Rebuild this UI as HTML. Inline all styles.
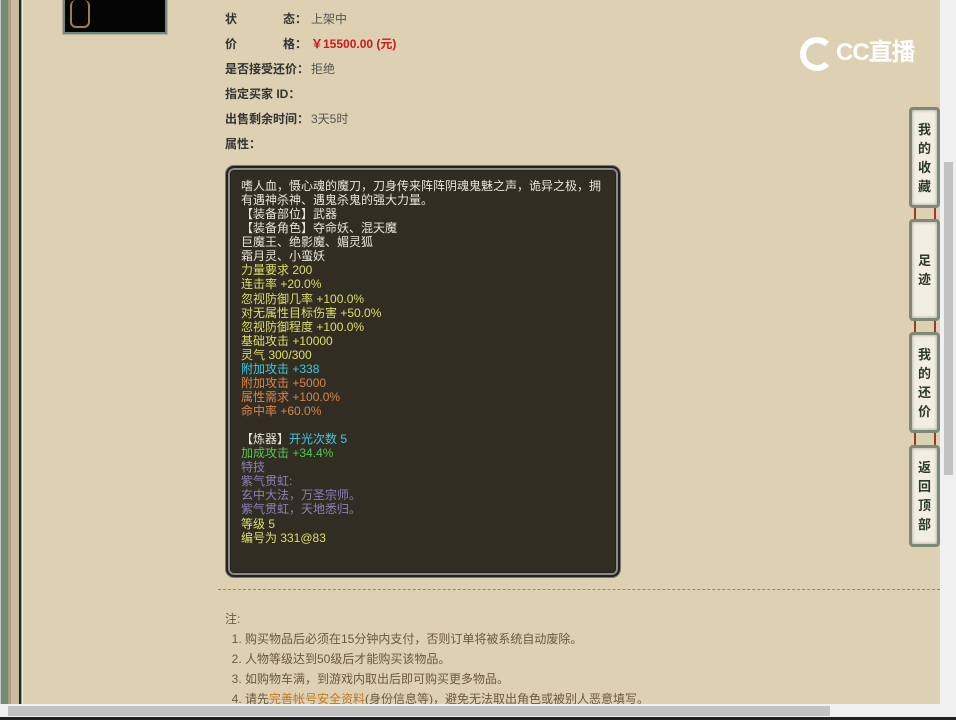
<!DOCTYPE html>
<html><head><meta charset="utf-8"><style>
*{margin:0;padding:0;box-sizing:border-box}
body{width:956px;height:720px;overflow:hidden;background:#ddd0b3;font-family:"Liberation Sans","Noto Sans CJK SC",sans-serif;position:relative;font-size:12px}
.abs{position:absolute}
.lab{position:absolute;left:225px;color:#333;font-weight:bold;font-size:12px}
.val{position:absolute;left:311px;color:#555;font-size:12px}
.box{left:226px;top:166px;width:394px;height:411px;background:#322d22;border:2px solid #222;border-radius:8px;box-shadow:inset 0 0 0 2px #8f8a80,inset 0 0 0 3px #222,0 0 0 1px #777}
.tx{position:absolute;left:241px;top:179px;width:370px;line-height:14.07px;font-size:12px;color:#e8e4d8}
.y{color:#dede6a}.c{color:#3fc8e0}.o{color:#d8864a}.g{color:#50c850}.p{color:#8c80b8}
.notes{left:225px;top:609px;color:#6b5a3a;font-size:12px;line-height:20px}
.btn{position:absolute;left:909px;width:31px;background:#f2eee2;border:3px solid #7d8a74;border-radius:4px;box-shadow:inset 0 0 3px #999;color:#2c3a2c;font-weight:bold;font-size:13px;text-align:center;display:flex;flex-direction:column;justify-content:center;line-height:19px}
.rope{position:absolute;width:2px;background:#9a3a2a}
</style></head><body>
<div class="abs" style="left:0;top:0;width:1px;height:720px;background:#c8c8c0"></div>
<div class="abs" style="left:1px;top:0;width:7px;height:720px;background:#6f8f76"></div>
<div class="abs" style="left:8px;top:0;width:3px;height:720px;background:#b09a80"></div>
<div class="abs" style="left:11px;top:0;width:8px;height:720px;background:#cbbba2"></div>
<div class="abs" style="left:19px;top:0;width:2px;height:720px;background:#1d2a20"></div>
<div class="abs" style="left:21px;top:0;width:1px;height:720px;background:#8aa890"></div>
<div class="abs" style="left:22px;top:0;width:1px;height:720px;background:#f0ece0"></div>

<div class="abs" style="left:63px;top:-2px;width:104px;height:36px;background:#050505;border:2px solid #6e8a7c;outline:1px solid #b7b0a0"></div>
<div class="abs" style="left:70px;top:0;width:20px;height:28px;border:2px solid #a08040;border-radius:6px;border-top:none"></div>

<div class="lab" style="top:10px">状</div><div class="lab" style="top:10px;left:283px">态：</div><div class="val" style="top:10px">上架中</div>
<div class="lab" style="top:35px">价</div><div class="lab" style="top:35px;left:283px">格：</div><div class="val" style="top:35px;color:#d01818;font-weight:bold">￥15500.00 (元)</div>
<div class="lab" style="top:60px">是否接受还价：</div><div class="val" style="top:60px">拒绝</div>
<div class="lab" style="top:85px">指定买家 ID：</div>
<div class="lab" style="top:110px">出售剩余时间：</div><div class="val" style="top:110px">3天5时</div>
<div class="lab" style="top:135px">属性：</div>

<div class="abs box"></div>
<div class="tx">嗜人血，慑心魂的魔刀，刀身传来阵阵阴魂鬼魅之声，诡异之极，拥有遇神杀神、遇鬼杀鬼的强大力量。<br>【装备部位】武器<br>【装备角色】夺命妖、混天魔<br>巨魔王、绝影魔、媚灵狐<br>霜月灵、小蛮妖<br><span class="y">力量要求 200<br>连击率 +20.0%<br>忽视防御几率 +100.0%<br>对无属性目标伤害 +50.0%<br>忽视防御程度 +100.0%<br>基础攻击 +10000<br>灵气 300/300</span><br><span class="c">附加攻击 +338</span><br><span class="o">附加攻击 +5000<br>属性需求 +100.0%<br>命中率 +60.0%</span><br><br>【炼器】<span class="c">开光次数 5</span><br><span class="g">加成攻击 +34.4%</span><br><span class="p">特技<br>紫气贯虹:<br>玄中大法，万圣宗师。<br>紫气贯虹，天地悉归。</span><br><span class="y">等级 5<br>编号为 331@83</span></div>

<div class="abs" style="left:218px;top:589px;width:722px;border-top:1px dashed #b8843a"></div>
<div class="abs notes">注:<br>&nbsp;&nbsp;1. 购买物品后必须在15分钟内支付，否则订单将被系统自动废除。<br>&nbsp;&nbsp;2. 人物等级达到50级后才能购买该物品。<br>&nbsp;&nbsp;3. 如购物车满，到游戏内取出后即可购买更多物品。<br>&nbsp;&nbsp;4. 请先<span style="color:#c07a20;text-decoration:underline">完善帐号安全资料</span>(身份信息等)，避免无法取出角色或被别人恶意填写。</div>

<div class="abs" style="left:800px;top:32px;color:#fff;font-size:24px;font-weight:bold;letter-spacing:-1px">
<span style="display:inline-block;width:34px;height:34px;border:6px solid #fff;border-radius:50%;border-right-color:transparent;vertical-align:middle;margin-right:2px"></span>CC直播</div>

<div class="rope" style="left:914px;top:206px;height:16px"></div><div class="rope" style="left:934px;top:206px;height:16px"></div>
<div class="rope" style="left:914px;top:319px;height:16px"></div><div class="rope" style="left:934px;top:319px;height:16px"></div>
<div class="rope" style="left:914px;top:431px;height:16px"></div><div class="rope" style="left:934px;top:431px;height:16px"></div>
<div class="btn" style="top:107px;height:101px">我<br>的<br>收<br>藏</div>
<div class="btn" style="top:219px;height:102px">足<br>迹</div>
<div class="btn" style="top:332px;height:101px">我<br>的<br>还<br>价</div>
<div class="btn" style="top:445px;height:102px">返<br>回<br>顶<br>部</div>

<div class="abs" style="left:940px;top:0;width:16px;height:704px;background:#f0f0f0"></div>
<div class="abs" style="left:944px;top:162px;width:9px;height:313px;background:#c2c2c2"></div>
<div class="abs" style="left:0;top:704px;width:956px;height:13px;background:#f0f0f0"></div>
<div class="abs" style="left:8px;top:706px;width:822px;height:10px;background:#c2c2c2"></div>
<div class="abs" style="left:0;top:717px;width:956px;height:3px;background:#222"></div>
</body></html>
